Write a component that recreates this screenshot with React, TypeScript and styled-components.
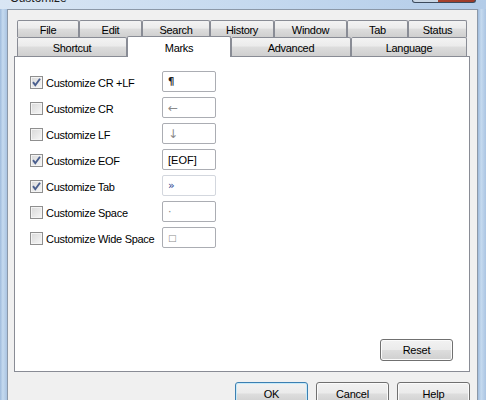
import styled, { createGlobalStyle } from "styled-components";

const GlobalStyle = createGlobalStyle`
  html, body {
    margin: 0;
    padding: 0;
    background: #f0f0f0;
  }
  * {
    box-sizing: border-box;
  }
`;

const Window = styled.div`
  width: 486px;
  height: 400px;
  overflow: hidden;
  display: flex;
  flex-direction: column;
  font-family: "Liberation Sans", Arial, sans-serif;
  font-size: 11px;
  letter-spacing: -0.3px;
  color: #000;
  background: linear-gradient(to right, #d9e6f4, #c2d7ee 60%, #b3cce8);
`;

const TitleBar = styled.div`
  flex: none;
  height: 9px;
  overflow: hidden;
  display: flex;
  justify-content: space-between;
  padding-left: 10px;
`;

const Title = styled.div`
  margin-top: -9px;
  line-height: 14px;
  font-size: 12px;
  letter-spacing: 0;
  color: #1e1e1e;
`;

const CloseBox = styled.div`
  width: 64px;
  height: 3px;
  margin-right: 10px;
  border: 1px solid #3b4a5c;
  border-top: none;
  border-radius: 0 0 3px 3px;
  background: linear-gradient(to right, #c9d6e4 0%, #c9d6e4 40%, #a8432e 40%, #9b3a28 100%);
`;

const Body = styled.div`
  flex: 1;
  min-height: 0;
  display: flex;
`;

const Frame = styled.div<{ $w: number }>`
  width: ${(p) => p.$w}px;
  flex: none;
  background: linear-gradient(to right, #9fbbdc, #c5daef 40%, #aac4e2);
`;

const Client = styled.div`
  flex: 1;
  display: flex;
  flex-direction: column;
  background: #f0f0f0;
  border: 1px solid #8b98a8;
  border-bottom: none;
  padding: 10px 7px 0 6px;
`;

const TabStrip = styled.div`
  flex: none;
  padding: 0 3px;
  display: flex;
  flex-direction: column;
`;

const TabRow = styled.div<{ $h: number }>`
  display: flex;
  height: ${(p) => p.$h}px;
`;

const Tab = styled.div<{ $w: number; $active?: boolean }>`
  width: ${(p) => p.$w}px;
  height: ${(p) => (p.$active ? "21px" : "100%")};
  margin-top: ${(p) => (p.$active ? "-1px" : "0")};
  position: relative;
  z-index: ${(p) => (p.$active ? 1 : 0)};
  display: flex;
  justify-content: center;
  align-items: center;
  padding-top: 1px;
  border: 1px solid #898c95;
  border-bottom: none;
  border-radius: 2px 2px 0 0;
  background: ${(p) =>
    p.$active
      ? "#ffffff"
      : "linear-gradient(#f3f3f3 0%, #ebebeb 45%, #dddddd 50%, #cfcfcf 100%)"};
  white-space: nowrap;
`;

const Panel = styled.div`
  flex: none;
  height: 316px;
  background: #ffffff;
  border: 1px solid #898c95;
  display: flex;
  flex-direction: column;
  padding: 14px 16px 10px 15px;
`;

const OptionList = styled.div`
  display: flex;
  flex-direction: column;
  gap: 5px;
`;

const OptionRow = styled.div`
  display: flex;
  align-items: center;
  height: 21px;
`;

const CheckLabel = styled.label`
  width: 132px;
  display: flex;
  align-items: center;
  gap: 3px;
  padding-top: 2px;
`;

const CheckBox = styled.span`
  width: 13px;
  height: 13px;
  flex: none;
  display: flex;
  border: 1px solid #8f8f8f;
  background: linear-gradient(135deg, #d8d8d8, #f7f7f7);
  box-shadow: inset 0 0 0 1px #f4f4f4;
`;

const MarkBox = styled.div<{
  $light?: boolean;
  $color: string;
  $bold?: boolean;
  $size: number;
}>`
  width: 54px;
  height: 21px;
  border: 1px solid ${(p) => (p.$light ? "#d3d7de" : "#abadb3")};
  border-radius: 2px;
  padding-left: 5px;
  display: flex;
  align-items: center;
  color: ${(p) => p.$color};
  font-family: "DejaVu Sans", "Liberation Sans", sans-serif;
  font-size: ${(p) => p.$size}px;
  font-weight: ${(p) => (p.$bold ? "bold" : "normal")};
  letter-spacing: 0;
  background: #fff;
`;

const EofText = styled.span`
  font-family: "Liberation Sans", Arial, sans-serif;
  font-size: 11px;
`;

const Button = styled.button<{ $default?: boolean }>`
  width: 73px;
  height: 23px;
  flex: none;
  font-family: "Liberation Sans", Arial, sans-serif;
  font-size: 11px;
  letter-spacing: -0.2px;
  color: #000;
  border: 1px solid ${(p) => (p.$default ? "#3c7fb1" : "#707070")};
  border-radius: 3px;
  background: linear-gradient(#f2f2f2 0%, #ebebeb 48%, #dddddd 52%, #cfcfcf 100%);
  box-shadow: inset 0 0 0 1px ${(p) => (p.$default ? "#c7eaf9" : "#fbfbfb")};
  padding: 0;
`;

const ResetButton = styled(Button)`
  height: 22px;
  margin-top: auto;
  align-self: flex-end;
`;

const Footer = styled.div`
  flex: none;
  display: flex;
  justify-content: flex-end;
  gap: 8px;
  margin-top: 10px;
`;

const Check = () => (
  <svg width="11" height="11" viewBox="0 0 11 11">
    <path d="M2 5.2 L4.3 8.2 L9 1.8" fill="none" stroke="#4a5f8e" strokeWidth="1.9" />
  </svg>
);

const row1 = [
  ["File", 62],
  ["Edit", 63],
  ["Search", 68],
  ["History", 64],
  ["Window", 73],
  ["Tab", 61],
  ["Status", 59],
] as const;

const row2 = [
  ["Shortcut", 110],
  ["Marks", 104],
  ["Advanced", 120],
  ["Language", 116],
] as const;

type Option = {
  label: string;
  checked: boolean;
  mark: string;
  color: string;
  size: number;
  bold?: boolean;
  light?: boolean;
};

const options: Option[] = [
  { label: "Customize CR +LF", checked: true, mark: "¶", color: "#1a1a1a", size: 10, bold: true },
  { label: "Customize CR", checked: false, mark: "←", color: "#8a8a8a", size: 12 },
  { label: "Customize LF", checked: false, mark: "↓", color: "#8a8a8a", size: 12 },
  { label: "Customize EOF", checked: true, mark: "[EOF]", color: "#000000", size: 11 },
  { label: "Customize Tab", checked: true, mark: "»", color: "#2b3f8f", size: 11, light: true },
  { label: "Customize Space", checked: false, mark: "·", color: "#8a8a8a", size: 11 },
  { label: "Customize Wide Space", checked: false, mark: "□", color: "#8a8a8a", size: 9 },
];

const App = () => {
  return (
    <>
      <GlobalStyle />
      <Window>
        <TitleBar>
          <Title>Customize</Title>
          <CloseBox />
        </TitleBar>
        <Body>
          <Frame $w={7} />
          <Client>
            <TabStrip>
              <TabRow $h={17}>
                {row1.map(([name, w]) => (
                  <Tab key={name} $w={w}>
                    {name}
                  </Tab>
                ))}
              </TabRow>
              <TabRow $h={19}>
                {row2.map(([name, w]) => (
                  <Tab key={name} $w={w} $active={name === "Marks"}>
                    {name}
                  </Tab>
                ))}
              </TabRow>
            </TabStrip>
            <Panel>
              <OptionList>
                {options.map((o) => (
                  <OptionRow key={o.label}>
                    <CheckLabel>
                      <CheckBox>{o.checked && <Check />}</CheckBox>
                      {o.label}
                    </CheckLabel>
                    <MarkBox
                      $color={o.color}
                      $bold={o.bold}
                      $light={o.light}
                      $size={o.size}
                    >
                      {o.mark === "[EOF]" ? <EofText>{o.mark}</EofText> : o.mark}
                    </MarkBox>
                  </OptionRow>
                ))}
              </OptionList>
              <ResetButton>Reset</ResetButton>
            </Panel>
            <Footer>
              <Button $default>OK</Button>
              <Button>Cancel</Button>
              <Button>Help</Button>
            </Footer>
          </Client>
          <Frame $w={8} />
        </Body>
      </Window>
    </>
  );
};

export default App;
